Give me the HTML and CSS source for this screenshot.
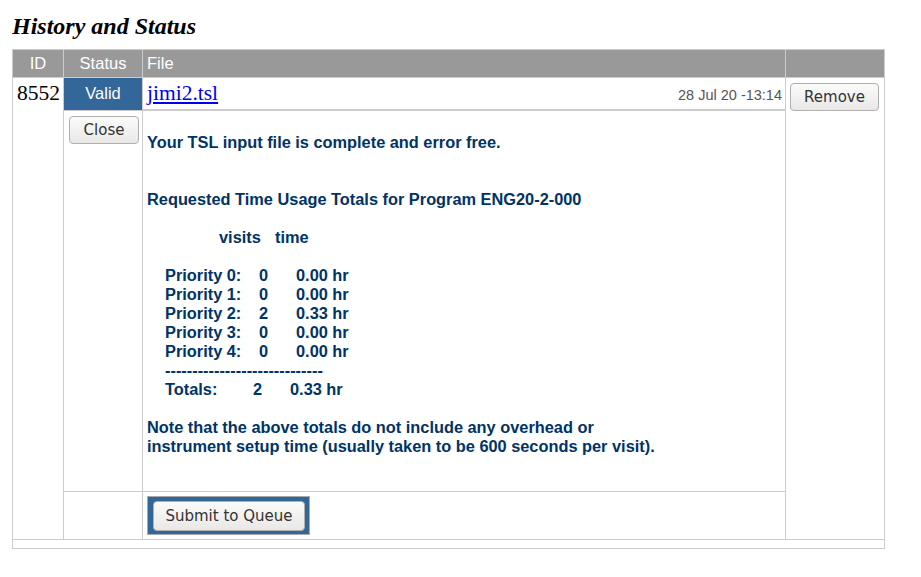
FILE: index.html
```html
<!DOCTYPE html>
<html lang="en">
<head>
    <meta charset="UTF-8">
    <title>History and Status</title>
    <link rel="stylesheet" href="styles.css">
</head>
<body>
    <h2 class="title">History and Status</h2>
    <table class="history">
        <tr class="head">
            <th class="c-id">ID</th>
            <th class="c-status">Status</th>
            <th class="c-file">File</th>
            <th class="c-act"></th>
        </tr>
        <tr>
            <td class="id" rowspan="3">8552</td>
            <td class="valid">Valid</td>
            <td class="fname">
                <div class="fname-row">
                    <a href="#">jimi2.tsl</a>
                    <span class="date">28 Jul 20 -13:14</span>
                </div>
            </td>
            <td class="act" rowspan="3"><button class="btn">Remove</button></td>
        </tr>
        <tr>
            <td class="ctl"><button class="btn">Close</button></td>
            <td class="report">
                Your TSL input file is complete and error free.<br>
                <br>
                <br>
                Requested Time Usage Totals for Program ENG20-2-000<br>
                <br>
                <span class="hdr"><span class="h-visits">visits</span>time</span><br>
                <br>
                <span class="line"><span class="lbl">Priority 0:</span><span class="cnt">0</span>0.00 hr</span><br>
                <span class="line"><span class="lbl">Priority 1:</span><span class="cnt">0</span>0.00 hr</span><br>
                <span class="line"><span class="lbl">Priority 2:</span><span class="cnt">2</span>0.33 hr</span><br>
                <span class="line"><span class="lbl">Priority 3:</span><span class="cnt">0</span>0.00 hr</span><br>
                <span class="line"><span class="lbl">Priority 4:</span><span class="cnt">0</span>0.00 hr</span><br>
                <span class="line">-----------------------------</span><br>
                <span class="line"><span class="lbl tot">Totals:</span><span class="cnt">2</span>0.33 hr</span><br>
                <br>
                Note that the above totals do not include any overhead or<br>
                instrument setup time (usually taken to be 600 seconds per visit).
            </td>
        </tr>
        <tr>
            <td class="ctl"></td>
            <td class="submit-cell">
                <form class="submit-box">
                    <button type="button" class="btn">Submit to Queue</button>
                </form>
            </td>
        </tr>
        <tr class="foot">
            <td colspan="4"></td>
        </tr>
    </table>
</body>
</html>
```

FILE: styles.css
```css
body {
    margin: 12px;
    font-family: "Liberation Serif", serif;
}

.title {
    font-size: 24px;
    font-style: italic;
    font-weight: bold;
    margin: 0 0 10px 0;
    line-height: 26px;
    padding-top: 1px;
}

.history {
    border-collapse: collapse;
    width: 873px;
    border: 1px solid #cccccc;
}
.history td, .history th {
    border: 1px solid #cccccc;
    padding: 0;
    vertical-align: top;
}

.head th {
    background-color: #999999;
    color: white;
    font-family: "Liberation Sans", Arial, sans-serif;
    font-weight: normal;
    font-size: 16.5px;
    height: 27px;
    vertical-align: middle;
}
.c-id { width: 50px; }
.c-status { width: 78px; }
.c-file { text-align: left; padding-left: 4px !important; }
.c-act { width: 98px; }

.history td.id {
    font-size: 21.5px;
    padding: 3px 0 0 4px;
}

.history td.valid {
    background-color: #336699;
    color: white;
    font-family: "Liberation Sans", Arial, sans-serif;
    font-size: 16.5px;
    text-align: center;
    vertical-align: middle;
    height: 31px;
}

.history td.fname {
    border-bottom: 2px solid #cccccc;
    vertical-align: middle;
}
.fname-row {
    display: flex;
    justify-content: space-between;
    align-items: baseline;
    padding: 0 3px 0 4px;
    height: 31px;
}
.fname-row a {
    color: #0000ee;
    font-size: 21.5px;
    line-height: 30px;
}
.date {
    color: #555555;
    font-family: "Liberation Sans", Arial, sans-serif;
    font-size: 14.5px;
}

.history td.act {
    padding: 5px 0 0 4px;
}

.btn {
    font-family: "DejaVu Sans", sans-serif;
    font-size: 15px;
    color: #333333;
    background: linear-gradient(#fbfbfa, #e9e8e6);
    border: 1px solid #b0b0b0;
    border-radius: 4px;
    padding: 0;
    height: 28px;
    cursor: pointer;
}
.act .btn { width: 89px; }

.history td.ctl {
    padding: 5px 0 0 5px;
}
.ctl .btn { width: 70px; }

.history td.report {
    font-family: "Liberation Sans", Arial, sans-serif;
    font-weight: bold;
    font-size: 16.35px;
    line-height: 19px;
    color: #003366;
    padding: 22px 4px 35px 4px;
}
.line {
    padding-left: 18px;
}
.hdr {
    padding-left: 72px;
}
.h-visits {
    display: inline-block;
    width: 56px;
}
.lbl {
    display: inline-block;
    width: 94px;
}
.lbl.tot { width: 88px; }
.cnt {
    display: inline-block;
    width: 37px;
}

.history td.submit-cell {
    padding: 4px 0 4px 4px;
}
.submit-box {
    display: inline-block;
    margin: 0;
    background-color: #336699;
    border: 1px solid #aaaaaa;
    padding: 4px 4px 3px 5px;
}
.submit-box .btn {
    display: block;
    height: 30px;
    width: 152px;
}

.foot td {
    height: 8px;
}
```
